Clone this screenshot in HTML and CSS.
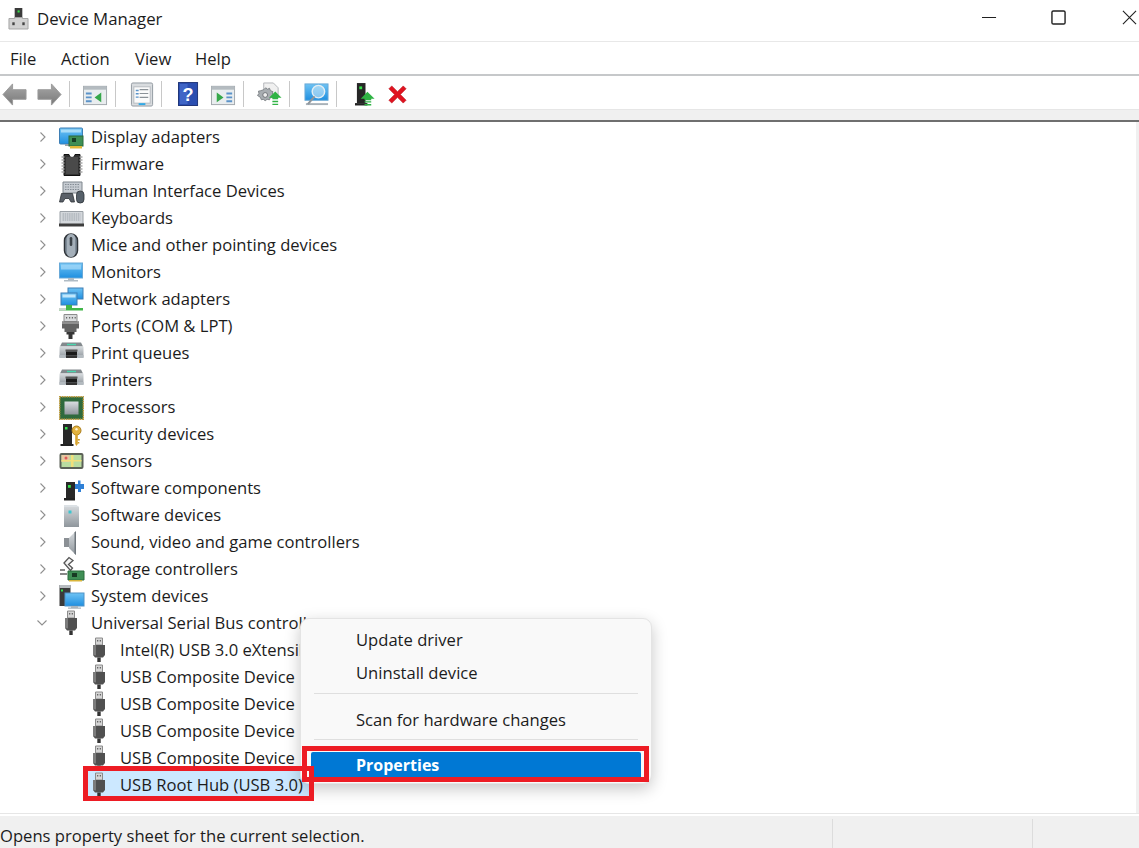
FILE: index.html
```html
<!DOCTYPE html>
<html lang="en">
<head>
<meta charset="utf-8">
<title>Device Manager</title>
<link rel="stylesheet" href="styles.css">
</head>
<body>
<svg class="sprite" width="0" height="0" aria-hidden="true">
  <defs>
    <linearGradient id="scr" x1="0" y1="0" x2="0" y2="1"><stop offset="0" stop-color="#6ec3f4"/><stop offset="1" stop-color="#1f8fe0"/></linearGradient>
    <linearGradient id="gry" x1="0" y1="0" x2="0" y2="1"><stop offset="0" stop-color="#d9dde0"/><stop offset="1" stop-color="#8f969c"/></linearGradient>
    <linearGradient id="arrow" x1="0" y1="0" x2="0" y2="1"><stop offset="0" stop-color="#a8a8a8"/><stop offset="1" stop-color="#787878"/></linearGradient>

    <symbol id="i-usb" viewBox="0 0 26 26">
      <path d="M8.500 1h7v7h-7z" fill="#d5d5d5" stroke="#8c8c8c"/>
      <path d="M10 3h1.300v1.600H10zM12.700 3H14v1.600h-1.300z" fill="#666"/>
      <path d="M6 8h12v10l-2 2.500H8L6 18z" fill="#505050"/>
      <path d="M6 8h3v10.500L6 18z" fill="#7c7c7c"/>
      <path d="M10.300 20.500h3.400V25h-3.400z" fill="#333"/>
    </symbol>
    <symbol id="i-display" viewBox="0 0 26 26">
      <rect x="0.500" y="4" width="23" height="16" rx="1" fill="url(#scr)" stroke="#3e7fb5"/>
      <rect x="2" y="5.500" width="20" height="3" fill="#a8dcf8"/>
      <rect x="6" y="20" width="10" height="2" fill="#9aa4ab"/>
      <rect x="10" y="12" width="14" height="10" fill="#3f8f55" stroke="#2a6b3c"/>
      <rect x="13" y="14" width="4" height="4" fill="#173f25"/>
      <path d="M11 22h12v2.500H11z" fill="#e0b93a"/>
    </symbol>
    <symbol id="i-firmware" viewBox="0 0 26 26">
      <path d="M5 3.500h5a3 3 0 0 0 6 0h5v21H5z" fill="#333" stroke="#111"/>
      <path d="M2.500 6h3M2.500 9h3M2.500 12h3M2.500 15h3M2.500 18h3M2.500 21h3M20.500 6h3M20.500 9h3M20.500 12h3M20.500 15h3M20.500 18h3M20.500 21h3" stroke="#a8a8a8" stroke-width="1.500"/>
      <path d="M7 6h12v17H7z" fill="#4a4a4a"/>
    </symbol>
    <symbol id="i-hid" viewBox="0 0 26 26">
      <path d="M4 4h19v11H4z" fill="#c7ccd2" stroke="#7e868d"/>
      <path d="M6 6.500h15M6 9h15M6 11.500h15" stroke="#848c94" stroke-width="1.200" stroke-dasharray="1.500 1"/>
      <path d="M0.500 24l2-8.500h11l2 8.500h-3.500l-2-3.500H6l-2 3.500z" fill="#5a6068" stroke="#2f3338" stroke-width=".8"/>
      <rect x="17.500" y="13" width="7.500" height="12" rx="3.600" fill="#56606a" stroke="#2f3338" stroke-width=".8"/>
    </symbol>
    <symbol id="i-keyboard" viewBox="0 0 26 26">
      <path d="M1 6.500h23v13H1z" fill="#d4d8dc" stroke="#9aa0a6"/>
      <path d="M3.500 9h18M3.500 11h18M3.500 13h18M3.500 15h18" stroke="#9aa2a9" stroke-width="1.200" stroke-dasharray="1.500 .7"/>
      <path d="M0 18.500h25v3H0z" fill="#3d3d3d"/>
    </symbol>
    <symbol id="i-mouse" viewBox="0 0 26 26">
      <rect x="5.500" y="2" width="13" height="23" rx="6.500" fill="#7f8c98" stroke="#2e3338" stroke-width="1.500"/>
      <path d="M8 6a4 4 0 0 1 8 0v15a4 4 0 0 1-8 0z" fill="#a4afb9"/>
      <rect x="10.700" y="5" width="2.600" height="9" rx="1.300" fill="#3c4349"/>
    </symbol>
    <symbol id="i-monitor" viewBox="0 0 26 26">
      <rect x="0.500" y="4" width="23" height="15" fill="url(#scr)" stroke="#68a9d8"/>
      <rect x="2" y="5.500" width="20" height="5" fill="#a9dcf9" opacity=".7"/>
      <path d="M9 19h6v2h4v1.500H5V21h4z" fill="#b0bcc5"/>
    </symbol>
    <symbol id="i-network" viewBox="0 0 26 26">
      <rect x="9" y="2" width="15" height="11" fill="url(#scr)" stroke="#3e7fb5"/>
      <rect x="2" y="7" width="16" height="12" fill="url(#scr)" stroke="#3e7fb5"/>
      <rect x="3.500" y="8.500" width="13" height="3" fill="#c0e6fb"/>
      <path d="M7 19h6v3h11v2.500H0V22h7z" fill="#42b649"/>
      <path d="M0 22h7v2.500H0z" fill="#c7d3c9"/>
    </symbol>
    <symbol id="i-ports" viewBox="0 0 26 26">
      <path d="M5 1.500h13v7H5z" fill="#d8dadc" stroke="#8c8c8c"/>
      <path d="M7 4h1.200v1.600H7zM10 4h1.200v1.600H10zM12.800 4H14v1.600h-1.200zM15.600 4h1.200v1.600h-1.200z" fill="#666"/>
      <path d="M3 8.500h17v7h-2.500V19h-12v-3.500H3z" fill="#636363"/>
      <path d="M3 8.500h17v2.500H3z" fill="#8f8f8f"/>
      <path d="M7.500 19h8v2.500H13.500V26h-4v-4.500h-2z" fill="#363636"/>
    </symbol>
    <symbol id="i-printer" viewBox="0 0 26 26">
      <path d="M3 2.500h19l2 4H1z" fill="#83898d"/>
      <path d="M8 3.800h9v1.400H8z" fill="#49d6ae"/>
      <path d="M0.500 6.500h24v11h-24z" fill="url(#gry)"/>
      <path d="M6.500 9.500h12v2H6.500z" fill="#555"/>
      <path d="M7 11.500h11v4H7z" fill="#1a1a1a"/>
      <path d="M7 15.500h11V18H7z" fill="#333"/>
      <path d="M0.500 15h6v3h-6zM18.500 15h6v3h-6z" fill="#b3babf"/>
    </symbol>
    <symbol id="i-processor" viewBox="0 0 26 26">
      <rect x="0.700" y="2.700" width="23.600" height="22.600" fill="#2f6a3d" stroke="#c39a3a" stroke-width="1.400" stroke-dasharray="1.500 .8"/>
      <rect x="2" y="4" width="21" height="20" fill="#2f6a3d"/>
      <rect x="5.500" y="7.500" width="14" height="13" fill="url(#gry)"/>
    </symbol>
    <symbol id="i-security" viewBox="0 0 26 26">
      <path d="M4 3h9v20H4z" fill="#282828"/>
      <path d="M1.500 23h13v2h-13z" fill="#222"/>
      <rect x="6" y="6" width="2.500" height="2.500" fill="#35e04a"/>
      <circle cx="17.500" cy="9.500" r="4.500" fill="#e3b23e" stroke="#a97c1a"/>
      <circle cx="17.500" cy="8.300" r="1.200" fill="#fff3cf"/>
      <path d="M16.200 13h2.600v10l-1.300 2-1.300-2z" fill="#d9a42f"/>
      <path d="M18.800 18h2v1.500h-2zM18.800 21h1.500v1.500h-1.500z" fill="#c99425"/>
    </symbol>
    <symbol id="i-sensors" viewBox="0 0 26 26">
      <rect x="0.500" y="5" width="24" height="16" rx="2" fill="#5b6157"/>
      <rect x="2.500" y="7" width="20" height="12" fill="#b9dca0"/>
      <path d="M2.500 7h8v7h-8z" fill="#e7c7a0"/>
      <path d="M12 7h2.500v12H12z" fill="#f2e07a"/>
      <path d="M2.500 12h20v1.500h-20z" fill="#f2e07a"/>
      <circle cx="7" cy="10" r="1.500" fill="#e05b5b"/>
    </symbol>
    <symbol id="i-softcomp" viewBox="0 0 26 26">
      <path d="M7 7h9v16H7z" fill="#282828"/>
      <path d="M5 23h11v2.500H5z" fill="#222"/>
      <rect x="9" y="10" width="2.800" height="2.800" fill="#35e04a"/>
      <path d="M16 9h3V5.500h2.500V9H25v5h-3v3h-3v-3h-3z" fill="#2f80d6"/>
    </symbol>
    <symbol id="i-softdev" viewBox="0 0 26 26">
      <path d="M5 3h12l3 2v20H5z" fill="url(#gry)"/>
      <path d="M5 3h12l3 2H5z" fill="#dce1e5"/>
      <rect x="9.500" y="8.500" width="3" height="3" fill="#3cc5cf"/>
    </symbol>
    <symbol id="i-sound" viewBox="0 0 26 26">
      <path d="M5 9h5v9H5z" fill="#8b9095"/>
      <path d="M10 9l7-7v24l-7-7z" fill="url(#gry)"/>
      <path d="M15.500 3.500L17 2v24l-1.500-1.500z" fill="#6f767c"/>
    </symbol>
    <symbol id="i-storage" viewBox="0 0 26 26">
      <path d="M5 7l5-5.500 4 3-4.500 4 4 3.500-2 2.500z" fill="#f4f4f4" stroke="#555" stroke-width="1.300"/>
      <path d="M1 13h5v2H1zM1 17h7v2H1z" fill="#888"/>
      <path d="M9 15h16v9H9z" fill="#3f8f55" stroke="#2a6b3c"/>
      <rect x="13" y="17" width="5" height="4" fill="#183c24"/>
      <path d="M10 24h13v1.500H10z" fill="#d9b53a"/>
    </symbol>
    <symbol id="i-system" viewBox="0 0 26 26">
      <path d="M0.500 2h11v21H.5z" fill="#3a3a3a"/>
      <path d="M0.500 2h11v3H.5z" fill="#b7bcc0"/>
      <rect x="2" y="6.500" width="2" height="2" fill="#35e04a"/>
      <rect x="6" y="10" width="19" height="13" fill="url(#scr)" stroke="#4e93c8"/>
      <path d="M12 23h7v1.500h3v1.300H9v-1.300h3z" fill="#aab5bd"/>
    </symbol>

    <symbol id="t-back" viewBox="0 0 26 26"><path d="M1 13L11 2v6h14v10H11v6z" fill="url(#arrow)" stroke="#9a9a9a"/></symbol>
    <symbol id="t-fwd" viewBox="0 0 26 26"><path d="M25 13L15 2v6H1v10h14v6z" fill="url(#arrow)" stroke="#9a9a9a"/></symbol>
    <symbol id="t-win1" viewBox="0 0 26 26">
      <rect x=".5" y="4.500" width="24" height="19" fill="#e9edef" stroke="#a2a8ad"/><path d="M.5 4.500h24v3.500H.5z" fill="#b4bbc0"/>
      <path d="M3 11h6v2H3zM3 15h6v2H3zM3 19h6v2H3z" fill="#5b93c9"/><path d="M19 11v10l-7-5z" fill="#35a84a"/>
    </symbol>
    <symbol id="t-win2" viewBox="0 0 26 26">
      <rect x=".5" y="4.500" width="24" height="19" fill="#e9edef" stroke="#a2a8ad"/><path d="M.5 4.500h24v3.500H.5z" fill="#b4bbc0"/>
      <path d="M16 11h6v2h-6zM16 15h6v2h-6zM16 19h6v2h-6z" fill="#5b93c9"/><path d="M6 11v10l7-5z" fill="#35a84a"/>
    </symbol>
    <symbol id="t-sheet" viewBox="0 0 26 26">
      <rect x="1.500" y="1" width="22" height="24" rx="1.500" fill="#d9dcdf" stroke="#9299a0"/>
      <rect x="4" y="5" width="17" height="17" fill="#fbfbfb" stroke="#b5babf"/>
      <path d="M6 8h3v1.500H6zM6 11.500h3V13H6zM6 15h3v1.500H6z" fill="#5b93c9"/>
      <path d="M10 8h9M10 12h9M10 16h9" stroke="#8b9298" stroke-width="1.200"/>
      <path d="M9 22h7v2H9z" fill="#32a9e6"/>
    </symbol>
    <symbol id="t-help" viewBox="0 0 22 26">
      <rect x=".5" y=".5" width="20" height="24" fill="#2a4eb0" stroke="#1c3276"/>
      <rect x="2" y="2" width="8" height="21" fill="#4e74d6" opacity=".6"/>
      <text x="10.500" y="19.500" class="help-mark">?</text>
    </symbol>
    <symbol id="t-scan" viewBox="0 0 26 26">
      <path d="M7 1h10l5 5v8H7z" fill="#f0f0f0" stroke="#b3b6b9"/>
      <path d="M7 8l2-2 2 1.500 2-1 1 2.500 2.500 1-.5 2.500 2 1.500-1.500 2.500-2.500-.5-1 2.500-2.500-.5-2 1.500-2-1.500-2 .5-1-2.500L.5 14 2 12l-.5-2.500L4 9z" fill="#a8adb1" stroke="#6e7377" stroke-width=".8"/>
      <circle cx="8.500" cy="13.500" r="2.500" fill="#eee" stroke="#6e7377"/>
      <path d="M19 10l6.500 6.500H22V18h-6v-1.500h-3.500z" fill="#2fb344"/>
      <path d="M16 19.500h6v1.500h-6zM16 22.500h6V24h-6z" fill="#2fb344"/>
    </symbol>
    <symbol id="t-remote" viewBox="0 0 26 26">
      <rect x="1" y="2" width="24" height="17" fill="url(#scr)" stroke="#6aa9d6"/>
      <rect x="2" y="22" width="23" height="2" fill="#a8b1b8"/>
      <circle cx="15" cy="10" r="6.500" fill="#d5ecfa" fill-opacity=".55" stroke="#e4eef4" stroke-width="1.500"/>
      <path d="M11 15l-7 8" stroke="#8f969c" stroke-width="2.200"/>
    </symbol>
    <symbol id="t-update" viewBox="0 0 22 26">
      <path d="M2 1h9v21H2z" fill="#262626"/><path d="M0 22h13v2.500H0z" fill="#222"/>
      <rect x="4.500" y="4.500" width="3" height="3" fill="#35e04a"/>
      <path d="M13 10l7.500 7.500H17V19h-7v-1.500H6z" fill="#2fb344"/>
      <path d="M10 20h7v1.500h-7zM10 23h7v1.500h-7z" fill="#2fb344"/>
    </symbol>
    <symbol id="t-x" viewBox="0 0 22 22">
      <path d="M2 5l3-3 6 6 6-6 3 3-6 6 6 6-3 3-6-6-6 6-3-3 6-6z" fill="#e0121f" stroke="#b50d17" stroke-width=".6"/>
    </symbol>
    <symbol id="i-app" viewBox="0 0 22 24">
      <path d="M7 1h8v11H7z" fill="#3a3a3a"/>
      <rect x="10" y="3.500" width="2.200" height="2.200" fill="#35e04a"/>
      <path d="M1 12h6v-1h8v1h6v11H1z" fill="#d2d2d2" stroke="#a5a5a5"/>
      <rect x="4.500" y="16" width="2.500" height="3" fill="#444"/><rect x="15" y="16" width="2.500" height="3" fill="#444"/>
    </symbol>
  </defs>
</svg>

<div class="window">
  <header class="titlebar">
    <svg class="app-icon"><use href="#i-app"/></svg>
    <span class="title">Device Manager</span>
    <div class="win-controls">
      <svg class="wc wc-min" viewBox="0 0 16 16"><path d="M0 8h15" stroke="#111" stroke-width="1"/></svg>
      <svg class="wc wc-max" viewBox="0 0 16 16"><rect x="1" y="1" width="14" height="14" rx="1.500" fill="none" stroke="#222" stroke-width="1.500"/></svg>
      <svg class="wc wc-close" viewBox="0 0 16 16"><path d="M1 1l14 14M15 1L1 15" stroke="#222" stroke-width="1.200"/></svg>
    </div>
  </header>

  <nav class="menubar">
    <span class="menu-file">File</span>
    <span class="menu-action">Action</span>
    <span class="menu-view">View</span>
    <span class="menu-help">Help</span>
  </nav>

  <div class="toolbar">
    <div class="tb-group g1"><svg class="tb"><use href="#t-back"/></svg><svg class="tb"><use href="#t-fwd"/></svg></div>
    <div class="tb-group g2"><svg class="tb"><use href="#t-win1"/></svg></div>
    <div class="tb-group g3"><svg class="tb"><use href="#t-sheet"/></svg></div>
    <div class="tb-group g4"><svg class="tb tb-narrow"><use href="#t-help"/></svg><svg class="tb"><use href="#t-win2"/></svg></div>
    <div class="tb-group g5"><svg class="tb"><use href="#t-scan"/></svg></div>
    <div class="tb-group g6"><svg class="tb"><use href="#t-remote"/></svg></div>
    <div class="tb-group g7"><svg class="tb tb-narrow"><use href="#t-update"/></svg><svg class="tb tb-x"><use href="#t-x"/></svg></div>
  </div>
  <div class="band"></div>

  <main class="tree">
    <div class="row"><svg class="chev" viewBox="0 0 8 12"><path d="M1.500 1.500l4.500 4.500-4.500 4.500"/></svg><svg class="ico"><use href="#i-display"/></svg><span>Display adapters</span></div>
    <div class="row"><svg class="chev" viewBox="0 0 8 12"><path d="M1.500 1.500l4.500 4.500-4.500 4.500"/></svg><svg class="ico"><use href="#i-firmware"/></svg><span>Firmware</span></div>
    <div class="row"><svg class="chev" viewBox="0 0 8 12"><path d="M1.500 1.500l4.500 4.500-4.500 4.500"/></svg><svg class="ico"><use href="#i-hid"/></svg><span>Human Interface Devices</span></div>
    <div class="row"><svg class="chev" viewBox="0 0 8 12"><path d="M1.500 1.500l4.500 4.500-4.500 4.500"/></svg><svg class="ico"><use href="#i-keyboard"/></svg><span>Keyboards</span></div>
    <div class="row"><svg class="chev" viewBox="0 0 8 12"><path d="M1.500 1.500l4.500 4.500-4.500 4.500"/></svg><svg class="ico"><use href="#i-mouse"/></svg><span>Mice and other pointing devices</span></div>
    <div class="row"><svg class="chev" viewBox="0 0 8 12"><path d="M1.500 1.500l4.500 4.500-4.500 4.500"/></svg><svg class="ico"><use href="#i-monitor"/></svg><span>Monitors</span></div>
    <div class="row"><svg class="chev" viewBox="0 0 8 12"><path d="M1.500 1.500l4.500 4.500-4.500 4.500"/></svg><svg class="ico"><use href="#i-network"/></svg><span>Network adapters</span></div>
    <div class="row"><svg class="chev" viewBox="0 0 8 12"><path d="M1.500 1.500l4.500 4.500-4.500 4.500"/></svg><svg class="ico"><use href="#i-ports"/></svg><span>Ports (COM &amp; LPT)</span></div>
    <div class="row"><svg class="chev" viewBox="0 0 8 12"><path d="M1.500 1.500l4.500 4.500-4.500 4.500"/></svg><svg class="ico"><use href="#i-printer"/></svg><span>Print queues</span></div>
    <div class="row"><svg class="chev" viewBox="0 0 8 12"><path d="M1.500 1.500l4.500 4.500-4.500 4.500"/></svg><svg class="ico"><use href="#i-printer"/></svg><span>Printers</span></div>
    <div class="row"><svg class="chev" viewBox="0 0 8 12"><path d="M1.500 1.500l4.500 4.500-4.500 4.500"/></svg><svg class="ico"><use href="#i-processor"/></svg><span>Processors</span></div>
    <div class="row"><svg class="chev" viewBox="0 0 8 12"><path d="M1.500 1.500l4.500 4.500-4.500 4.500"/></svg><svg class="ico"><use href="#i-security"/></svg><span>Security devices</span></div>
    <div class="row"><svg class="chev" viewBox="0 0 8 12"><path d="M1.500 1.500l4.500 4.500-4.500 4.500"/></svg><svg class="ico"><use href="#i-sensors"/></svg><span>Sensors</span></div>
    <div class="row"><svg class="chev" viewBox="0 0 8 12"><path d="M1.500 1.500l4.500 4.500-4.500 4.500"/></svg><svg class="ico"><use href="#i-softcomp"/></svg><span>Software components</span></div>
    <div class="row"><svg class="chev" viewBox="0 0 8 12"><path d="M1.500 1.500l4.500 4.500-4.500 4.500"/></svg><svg class="ico"><use href="#i-softdev"/></svg><span>Software devices</span></div>
    <div class="row"><svg class="chev" viewBox="0 0 8 12"><path d="M1.500 1.500l4.500 4.500-4.500 4.500"/></svg><svg class="ico"><use href="#i-sound"/></svg><span>Sound, video and game controllers</span></div>
    <div class="row"><svg class="chev" viewBox="0 0 8 12"><path d="M1.500 1.500l4.500 4.500-4.500 4.500"/></svg><svg class="ico"><use href="#i-storage"/></svg><span>Storage controllers</span></div>
    <div class="row"><svg class="chev" viewBox="0 0 8 12"><path d="M1.500 1.500l4.500 4.500-4.500 4.500"/></svg><svg class="ico"><use href="#i-system"/></svg><span>System devices</span></div>
    <div class="row"><svg class="chev chev-open" viewBox="0 0 12 8"><path d="M1.500 1.500l4.500 4.500 4.500-4.500"/></svg><svg class="ico"><use href="#i-usb"/></svg><span>Universal Serial Bus controllers</span></div>
    <div class="row child"><svg class="ico"><use href="#i-usb"/></svg><span>Intel(R) USB 3.0 eXtensible Host Controller</span></div>
    <div class="row child"><svg class="ico"><use href="#i-usb"/></svg><span>USB Composite Device</span></div>
    <div class="row child"><svg class="ico"><use href="#i-usb"/></svg><span>USB Composite Device</span></div>
    <div class="row child"><svg class="ico"><use href="#i-usb"/></svg><span>USB Composite Device</span></div>
    <div class="row child"><svg class="ico"><use href="#i-usb"/></svg><span>USB Composite Device</span></div>
    <div class="row child selected"><div class="sel-bg"><svg class="ico"><use href="#i-usb"/></svg><span>USB Root Hub (USB 3.0)</span></div></div>
  </main>

  <footer class="statusbar">
    <div class="st-main">Opens property sheet for the current selection.</div>
    <div class="st-mid"></div>
    <div class="st-end"></div>
  </footer>

  <div class="ctx-menu">
    <div class="ctx-item ctx-first">Update driver</div>
    <div class="ctx-item">Uninstall device</div>
    <div class="ctx-sep"></div>
    <div class="ctx-item">Scan for hardware changes</div>
    <div class="ctx-sep ctx-sep-last"></div>
    <div class="ctx-item ctx-active">Properties</div>
  </div>
  <div class="mark mark-root"></div>
  <div class="mark mark-props"></div>
</div>
</body>
</html>
```
FILE: styles.css
```css
* { box-sizing: border-box; }
html, body { margin: 0; padding: 0; background: #fff; }
body { font-family: "Open Sans", "Noto Sans", sans-serif; color: #1c1c1c; font-size: 16.6px; }
.sprite { position: absolute; }
.help-mark { font-family: "Liberation Sans", sans-serif; font-size: 19px; font-weight: 700; fill: #fff; text-anchor: middle; }

.window { position: relative; width: 1139px; height: 848px; overflow: hidden; display: flex; flex-direction: column; }

.titlebar { height: 42px; flex: none; display: flex; align-items: center; border-bottom: 1px solid #e8e8e8; padding-left: 8px; }
.app-icon { width: 21px; height: 23px; margin-right: 8px; margin-top: -5px; }
.title { margin-top: -4px; font-size: 16.8px; }
.win-controls { margin-left: auto; display: flex; align-items: center; margin-top: -7px; }
.wc { display: block; width: 15px; height: 15px; }
.wc-min { margin-right: 54px; }
.wc-max { margin-right: 56px; }
.wc-close { margin-right: 2px; }

.menubar { height: 34px; flex: none; display: flex; align-items: center; border-bottom: 2px solid #c6c8ca; padding-left: 10px; padding-top: 1px; }
.menu-file { width: 51px; }
.menu-action { width: 74px; }
.menu-view { width: 60px; }

.toolbar { height: 34px; flex: none; display: flex; align-items: center; border-bottom: 1px solid #e6e6e6; padding-top: 3px; }
.tb-group { display: flex; align-items: center; height: 26px; }
.tb { display: block; width: 25px; height: 25px; }
.tb-narrow { width: 21px; }
.tb-x { width: 21px; height: 21px; }
.g1, .g2, .g3, .g4, .g5, .g6 { border-right: 1px solid #c8c8c8; }
.g1 { width: 70px; padding-left: 2px; gap: 10px; }
.g2 { width: 46px; padding-left: 13px; }
.g3 { width: 46px; padding-left: 14px; }
.g4 { width: 82px; padding-left: 16px; gap: 12px; }
.g5 { width: 46px; padding-left: 13px; }
.g6 { width: 47px; padding-left: 14px; }
.g7 { padding-left: 18px; gap: 11px; }

.band { height: 12px; flex: none; background: #f0f0f0; border-bottom: 2px solid #6f6f6f; }

.tree { flex: 1; min-height: 0; padding-top: 1px; border-right: 3px solid #f0f0f0; }
.row { height: 27px; display: flex; align-items: center; padding-left: 39px; white-space: nowrap; }
.chev { width: 8px; height: 12px; fill: none; stroke: #8f8f8f; stroke-width: 1.100; flex: none; }
.chev-open { width: 12px; height: 8px; margin-left: -3px; margin-right: -1px; }
.ico { width: 26px; height: 26px; flex: none; margin-left: 12px; margin-right: 6px; }
.child { padding-left: 87px; }
.child .ico { margin-left: 0; margin-right: 7px; }
.sel-bg { display: flex; align-items: center; background: #cce8ff; height: 27px; padding-right: 6px; }

.statusbar { height: 35px; flex: none; display: flex; background: #f0f0f0; border-top: 1px solid #e6e6e6; box-shadow: inset 0 2px 0 #fff; padding-top: 5px; }
.st-main { width: 833px; padding-top: 5px; border-right: 1px solid #dcdcdc; }
.st-mid { width: 200px; border-right: 1px solid #dcdcdc; }
.st-end { flex: 1; }

.ctx-menu { position: absolute; left: 300px; top: 618px; width: 352px; height: 166px; padding: 6px 11px 0; background: #f9f9f9; border: 1px solid #e4e4e4; border-radius: 9px; box-shadow: 0 5px 16px rgba(0,0,0,.22); }
.ctx-item { height: 33px; line-height: 32px; padding-left: 45px; margin: 0 -1px; }
.ctx-sep { height: 1px; margin: 3px 2px 10px 2px; background: #dfdfdf; }
.ctx-sep-last { margin-top: 2px; margin-bottom: 12px; }
.ctx-first { margin-top: -1px; }
.ctx-active { height: 29px; line-height: 27px; background: #0078d4; color: #fff; font-weight: 700; font-size: 16px; border-radius: 2px; }

.mark { position: absolute; border: 5px solid #ed1c24; }
.mark-root { left: 83px; top: 766px; width: 231px; height: 35px; }
.mark-props { left: 302px; top: 746px; width: 347px; height: 36px; }
```
